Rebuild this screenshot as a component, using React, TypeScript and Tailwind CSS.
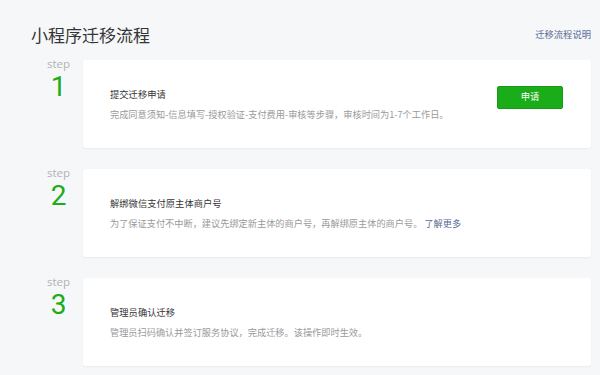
import React from 'react';

type Step = {
  no: number;
  title: string;
  desc: string;
  more?: string;
  action?: string;
};

const steps: Step[] = [
  {
    no: 1,
    title: '提交迁移申请',
    desc: '完成同意须知-信息填写-授权验证-支付费用-审核等步骤，审核时间为1-7个工作日。',
    action: '申请',
  },
  {
    no: 2,
    title: '解绑微信支付原主体商户号',
    desc: '为了保证支付不中断，建议先绑定新主体的商户号，再解绑原主体的商户号。',
    more: '了解更多',
  },
  {
    no: 3,
    title: '管理员确认迁移',
    desc: '管理员扫码确认并签订服务协议，完成迁移。该操作即时生效。',
  },
];

const cjk = { fontFamily: '"Noto Sans CJK SC", "Liberation Sans", sans-serif' };

export default function App() {
  return (
    <div className="min-h-screen w-full bg-[#f6f7f9] pl-[31px] pr-[9px] pt-[22px]" style={cjk}>
      <header className="flex items-center justify-between">
        <h1 className="text-[17px] leading-[26px] font-normal text-[#353535]">小程序迁移流程</h1>
        <a className="text-[9.3px] text-[#576b95]">迁移流程说明</a>
      </header>

      <div className="mt-[12px] flex flex-col gap-[21px]">
        {steps.map((s) => (
          <div key={s.no} className="flex">
            <div className="flex w-[52px] shrink-0 flex-col items-center pl-[3px]">
              <div
                className="-mt-[4px] text-[11.5px] leading-[16px] text-[#b2b2b2]"
                style={{ fontFamily: '"Open Sans", "Liberation Sans", sans-serif' }}
              >
                step
              </div>
              <div
                className="-mt-[1px] text-[28px] leading-[32px] text-[#1aad19]"
                style={{ fontFamily: 'Roboto, "Liberation Sans", sans-serif' }}
              >
                {s.no}
              </div>
            </div>
            <div className="flex h-[88px] flex-1 items-center justify-between rounded-[3px] bg-white pl-[27px] pr-[28px] shadow-[0_1px_2px_rgba(0,0,0,0.05)]">
              <div className="flex flex-col">
                <div className="text-[9.3px] leading-[20px] text-[#353535]">{s.title}</div>
                <div className="text-[9.2px] leading-[20px] text-[#9a9a9a]">
                  {s.desc}
                  {s.more && <a className="ml-[2px] text-[#576b95]">{s.more}</a>}
                </div>
              </div>
              {s.action && (
                <button className="mb-[14px] h-[23px] w-[66px] rounded-[2px] border border-[#179b16] bg-[#1aad19] text-[9.3px] text-white">
                  {s.action}
                </button>
              )}
            </div>
          </div>
        ))}
      </div>
    </div>
  );
}
